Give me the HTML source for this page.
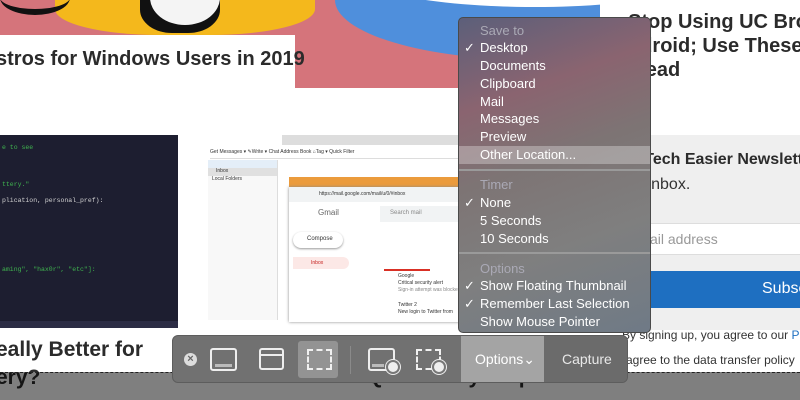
<!DOCTYPE html>
<html><head><meta charset="utf-8"><style>
*{margin:0;padding:0;box-sizing:border-box}
html,body{width:800px;height:400px;overflow:hidden}
body{position:relative;background:#fff;font-family:"Liberation Sans",sans-serif}
#w{position:absolute;left:0;top:0;width:800px;height:400px;overflow:hidden}
.a{position:absolute}
.h{font-weight:bold;color:#2b2b2b;font-size:20px;white-space:nowrap}
.menu{left:458px;top:17px;width:193px;height:316px;border-radius:5px;background:linear-gradient(160deg,#5c5f7a 0%,#8a6470 25%,#7d7474 45%,#7f7f7f 70%,#6f7a86 100%);border:1px solid #4a4a4a;color:#fff;font-size:13px}
.menu div{position:absolute;left:21px;white-space:nowrap}
.menu .g{color:#aaa9b5}
.menu .c{left:5px}
.sep{left:0!important;width:191px;height:2px;background:#9a9a9a}
.tb{left:172px;top:335px;width:456px;height:48px;border-radius:6px;background:#717171;border:1px solid #5d5d5d;overflow:hidden}
</style></head><body><div id="w">
<div class="a" style="left:0;top:0;width:600px;height:88px;background:#d5747b;overflow:hidden">
<div class="a" style="left:55px;top:-30px;width:260px;height:65px;background:#f4b81c;border-radius:40%"></div>
<div class="a" style="left:0;top:-20px;width:70px;height:35px;border-bottom:6px solid #111;border-radius:50%"></div>
<div class="a" style="left:140px;top:-25px;width:80px;height:58px;background:#111;border-radius:0 0 40% 40%"></div>
<div class="a" style="left:150px;top:-30px;width:70px;height:55px;background:#f4f4f4;border-radius:0 0 50% 50%"></div>
<div class="a" style="left:335px;top:-60px;width:400px;height:120px;background:#4f8fdc;border-radius:50%"></div>
<div class="a" style="left:345px;top:-70px;width:380px;height:77px;background:#fff;border-radius:50%"></div>
</div>
<div class="a" style="left:600px;top:0;width:200px;height:135px;background:#fff"></div>
<div class="a" style="left:0;top:35px;width:295px;height:53px;background:#fff"></div>
<div class="a h" style="left:-4px;top:48px">stros for Windows Users in 2019</div>
<div class="a" style="left:600px;top:0;width:200px;height:135px;overflow:hidden"><div class="a h" style="left:28px;top:10px;line-height:24px;font-size:20px">Stop Using UC Browser<br>ndroid; Use These<br>stead</div></div>
<div class="a" style="left:0;top:135px;width:178px;height:193px;background:#1d1e30;font-family:'Liberation Mono',monospace;font-size:6.5px;color:#d0d0d0;overflow:hidden">
<div class="a" style="left:2px;top:9px;color:#3fb34f">e to see</div>
<div class="a" style="left:2px;top:46px;color:#3fb34f">ttery."</div>
<div class="a" style="left:2px;top:62px">plication, personal_pref):</div>
<div class="a" style="left:2px;top:131px;color:#3fb34f">aming", "hax0r", "etc"]:</div>
<div class="a" style="left:0;top:186px;width:178px;height:7px;background:#2c2d45"></div>
</div>
<div class="a" style="left:208px;top:135px;width:252px;height:193px;background:#fff;font-size:5px;color:#333;overflow:hidden">
<div class="a" style="left:74px;top:0;width:178px;height:10px;background:#ddd"></div>
<div class="a" style="left:2px;top:14px;width:250px;height:10px;border-bottom:1px solid #ddd;white-space:nowrap">Get Messages ▾ ✎Write ▾ Chat Address Book ⌂Tag ▾ Quick Filter</div>
<div class="a" style="left:0;top:25px;width:70px;height:160px;border-right:1px solid #ddd;background:#f8f8f8"><div style="background:#e4eef8;height:8px"></div><div style="background:#e0e0e0;height:8px;padding-left:8px">Inbox</div><div style="padding-left:4px">Local Folders</div></div>
<div class="a" style="left:81px;top:42px;width:171px;height:10px;background:#eb9b3c"></div>
<div class="a" style="left:81px;top:52px;width:171px;height:135px;background:#fff;box-shadow:0 0 3px #888"></div>
<div class="a" style="left:81px;top:52px;width:171px;height:15px;background:#f1f3f4;font-size:5px;padding:4px 30px;white-space:nowrap">https://mail.google.com/mail/u/0/#inbox</div>
<div class="a" style="left:110px;top:73px;font-size:8px;color:#666">Gmail</div>
<div class="a" style="left:172px;top:71px;width:80px;height:16px;background:#f1f3f4;font-size:6px;color:#888;padding:4px 10px">Search mail</div>
<div class="a" style="left:85px;top:97px;width:50px;height:16px;border-radius:8px;box-shadow:0 1px 2px #999;font-size:6px;padding:4px 14px">Compose</div>
<div class="a" style="left:85px;top:122px;width:56px;height:12px;background:#fce8e6;border-radius:0 6px 6px 0;color:#c5221f;font-size:5px;padding:3px 18px">Inbox</div>
<div class="a" style="left:176px;top:134px;width:46px;height:2px;background:#d93025"></div>
<div class="a" style="left:190px;top:138px;font-size:5px;line-height:7px;white-space:nowrap">Google<br>Critical security alert<br><span style="color:#888">Sign-in attempt was blocked</span></div>
<div class="a" style="left:190px;top:167px;font-size:5px;line-height:7px;white-space:nowrap">Twitter 2<br>New login to Twitter from</div>
</div>
<div class="a" style="left:600px;top:135px;width:200px;height:195px;background:#efefef;overflow:hidden">
<div class="a" style="left:22px;top:16px;font-weight:bold;color:#2b2b2b;font-size:16px;white-space:nowrap">ke Tech Easier Newsletter</div>
<div class="a" style="left:20px;top:41px;color:#333;font-size:16px;white-space:nowrap">our inbox.</div>
<div class="a" style="left:0;top:88px;width:200px;height:32px;background:#fff;border-top:1px solid #ddd;border-bottom:1px solid #ddd;color:#999;font-size:14px;padding:7px 22px;white-space:nowrap">r email address</div>
<div class="a" style="left:0;top:136px;width:200px;height:37px;background:#1e6fc1;color:#fff;font-size:16px;padding:9px 162px;white-space:nowrap">Subscribe</div>
</div>
<div class="a" style="left:600px;top:320px;width:200px;height:60px;overflow:hidden">
<div class="a" style="left:22px;top:8px;color:#333;font-size:12px;white-space:nowrap">By signing up, you agree to our <span style="color:#1e6fc1">Privacy</span></div>
<div class="a" style="left:26px;top:33px;color:#333;font-size:12px;white-space:nowrap">agree to the data transfer policy</div>
</div>
<div class="a h" style="left:-4px;top:338px;font-size:21px">eally Better for</div>
<div class="a h" style="left:-4px;top:366px;font-size:21px">ery?</div>
<div class="a h" style="left:213px;top:365px;font-size:21px">Thunderbird in Quick Easy Steps</div>
<div class="a" style="left:0;top:372px;width:800px;height:28px;background:rgba(0,0,0,0.5);border-top:1px dashed #222"></div>
<div class="a tb">
<div class="a" style="left:11px;top:17px;width:13px;height:13px;border-radius:50%;background:#ddd;color:#666;font-size:11px;line-height:13px;text-align:center;font-weight:bold">×</div>
<div class="a" style="left:37px;top:12px;width:27px;height:23px;border:2px solid #eee;border-radius:3px"><div style="position:absolute;left:3px;right:3px;bottom:2px;height:3px;background:#bbb"></div></div>
<div class="a" style="left:86px;top:12px;width:25px;height:22px;border:2px solid #eee;border-radius:3px"><div style="position:absolute;left:0;right:0;top:4px;height:2px;background:#eee"></div></div>
<div class="a" style="left:125px;top:5px;width:40px;height:37px;background:#939393;border-radius:3px"></div>
<div class="a" style="left:134px;top:13px;width:25px;height:21px;border:2px dashed #f0f0f0"></div>
<div class="a" style="left:177px;top:10px;width:1px;height:28px;background:#8a8a8a"></div>
<div class="a" style="left:195px;top:12px;width:27px;height:23px;border:2px solid #eee;border-radius:3px"><div style="position:absolute;left:2px;width:12px;bottom:2px;height:3px;background:#bbb"></div></div>
<div class="a" style="left:213px;top:24px;width:14px;height:14px;border-radius:50%;background:#eee;border:2px solid #777;box-shadow:0 0 0 1px #eee"></div>
<div class="a" style="left:243px;top:13px;width:25px;height:21px;border:2px dashed #f0f0f0"></div>
<div class="a" style="left:259px;top:24px;width:14px;height:14px;border-radius:50%;background:#eee;border:2px solid #777;box-shadow:0 0 0 1px #eee"></div>
<div class="a" style="left:288px;top:0;width:83px;height:48px;background:#a4a4a4;color:#fff;font-size:14px;padding-top:15px;padding-left:14px">Options⌄</div>
<div class="a" style="left:371px;top:0;width:85px;height:48px;background:#6b6b6b;color:#e8e8e8;font-size:14px;padding-top:15px;padding-left:18px">Capture</div>
</div>
<div class="a menu">
<div class="g" style="top:5px">Save to</div>
<div class="c" style="top:22px">✓</div><div style="top:22px">Desktop</div>
<div style="top:40px">Documents</div>
<div style="top:58px">Clipboard</div>
<div style="top:76px">Mail</div>
<div style="top:93px">Messages</div>
<div style="top:111px">Preview</div>
<div style="left:0;top:128px;width:191px;height:18px;background:rgba(255,255,255,0.3)"></div>
<div style="top:129px">Other Location...</div>
<div class="sep" style="top:151px"></div>
<div class="g" style="top:159px">Timer</div>
<div class="c" style="top:177px">✓</div><div style="top:177px">None</div>
<div style="top:195px">5 Seconds</div>
<div style="top:213px">10 Seconds</div>
<div class="sep" style="top:234px"></div>
<div class="g" style="top:243px">Options</div>
<div class="c" style="top:260px">✓</div><div style="top:260px">Show Floating Thumbnail</div>
<div class="c" style="top:278px">✓</div><div style="top:278px">Remember Last Selection</div>
<div style="top:296px">Show Mouse Pointer</div>
</div>
</div></body></html>
